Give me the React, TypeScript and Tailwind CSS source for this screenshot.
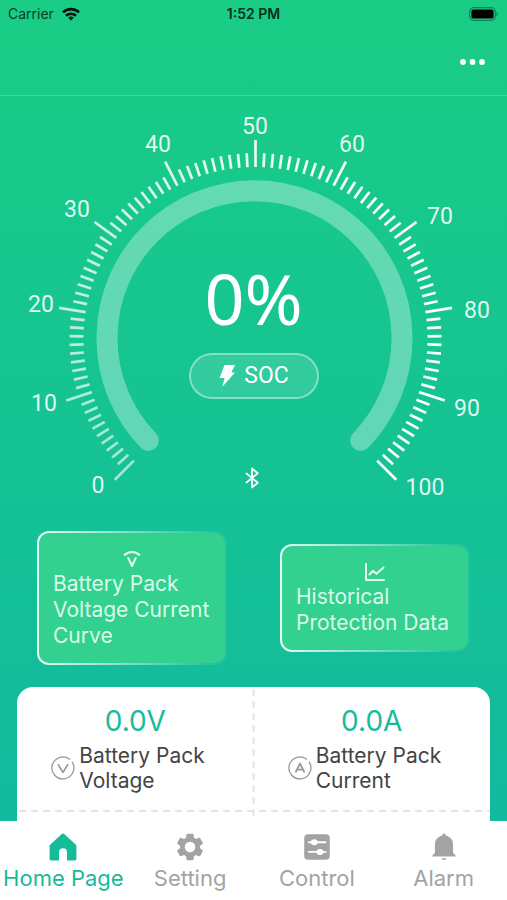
import type { ReactNode } from 'react';

const CX = 255.5;
const CY = 243;

const gaugeLabels = [
  { value: 0, x: 98, y: 397 },
  { value: 10, x: 44, y: 315 },
  { value: 20, x: 41, y: 216 },
  { value: 30, x: 77, y: 121 },
  { value: 40, x: 158, y: 56 },
  { value: 50, x: 255, y: 38 },
  { value: 60, x: 352, y: 56 },
  { value: 70, x: 440, y: 128 },
  { value: 80, x: 477, y: 222 },
  { value: 90, x: 467, y: 320 },
  { value: 100, x: 425, y: 399 },
];

function StatusBar() {
  return (
    <div className="grid h-7 grid-cols-3 items-center px-2 text-sm text-[#06402a]">
      <div className="flex items-center gap-2">
        <span>Carrier</span>
        <svg viewBox="0 0 18 14" className="h-[14px] w-[18px]" fill="none" stroke="#04140d" strokeWidth="2.6">
          <path d="M1 5.4a11.4 11.4 0 0 1 16 0" />
          <path d="M4 8.7a7.2 7.2 0 0 1 10 0" />
          <path d="M9 13.6 6.2 10.8a4 4 0 0 1 5.6 0Z" fill="#04140d" stroke="none" />
        </svg>
      </div>
      <span className="text-center font-semibold text-[#04301e]">1:52 PM</span>
      <svg viewBox="0 0 30 14" className="h-[14px] w-[30px] justify-self-end">
        <rect x="0.7" y="0.7" width="25.6" height="12.6" rx="4" fill="none" stroke="#0d8055" strokeWidth="1.2" />
        <rect x="2.4" y="2.4" width="22.2" height="9.2" rx="2.2" fill="#000" />
        <path d="M27.6 4.8c1.6.5 1.6 3.9 0 4.4Z" fill="#0d8055" />
      </svg>
    </div>
  );
}

function Header() {
  return (
    <header className="flex h-[68px] items-center justify-end border-b border-white/20 px-5">
      <button type="button" aria-label="More">
        <svg viewBox="0 0 28 8" className="h-2 w-7" fill="#fff">
          <circle cx="4" cy="4" r="2.9" />
          <circle cx="13.5" cy="4" r="2.9" />
          <circle cx="23" cy="4" r="2.9" />
        </svg>
      </button>
    </header>
  );
}

function BluetoothIcon() {
  return (
    <svg viewBox="0 0 24 24" className="size-6" fill="none" stroke="#fff" strokeWidth="1.8" strokeLinecap="round" strokeLinejoin="round">
      <path d="m4.500 7.500 11.200 9.200-5.700 4.800V2.500l5.700 4.800-11.200 9.200" />
    </svg>
  );
}

function Gauge() {
  const ticks = Array.from({ length: 101 }, (_, i) => i);

  return (
    <section className="relative">
      <svg viewBox="0 0 507 424" className="block w-full">
        {ticks.map((i) => (
          <line
            key={i}
            x1={CX}
            x2={CX}
            y1={CY - 172}
            y2={CY - (i % 10 === 0 ? 199 : 186)}
            stroke="#fff"
            strokeWidth="2.7"
            strokeOpacity={Math.min(0.97, 0.6 + i * 0.006)}
            transform={`rotate(${-135 + i * 2.7} ${CX} ${CY})`}
          />
        ))}
        <path
          d="M148.3 344.5A147.5 147.5 0 1 1 360.7 344.5"
          fill="none"
          stroke="#fff"
          strokeOpacity="0.33"
          strokeWidth="21"
          strokeLinecap="round"
        />
        <g fill="#fff" fillOpacity="0.88" fontSize="23" fontFamily="Roboto, sans-serif" textAnchor="middle">
          {gaugeLabels.map((l) => (
            <text key={l.value} x={l.x} y={l.y}>
              {l.value}
            </text>
          ))}
        </g>
      </svg>
      <div className="absolute inset-0 flex flex-col items-center pt-[162px] text-white">
        <p className="font-['Noto_Sans',sans-serif] text-[70px] leading-[80px]">0%</p>
        <div className="mt-[15px] flex h-[46px] w-[130px] items-center justify-center gap-2 rounded-full border-2 border-white/40 bg-white/12 font-['Roboto',sans-serif] text-[23px]">
          <svg viewBox="0 0 18 24" className="h-6 w-[18px]" fill="#fff">
            <path d="M6.500 1H17l-3.600 7.400H17L4.200 23l2.400-9H1.500Z" />
          </svg>
          <span>SOC</span>
        </div>
        <div className="mt-[67px]">
          <BluetoothIcon />
        </div>
      </div>
    </section>
  );
}

function CurveIcon() {
  return (
    <svg viewBox="0 0 24 24" className="size-6" fill="none" stroke="#e4fbef" strokeWidth="2" strokeLinecap="round" strokeLinejoin="round">
      <path d="M4.6 8a10.4 10.4 0 0 1 14.8 0" />
      <path d="m8.3 11 3.7 8 3.7-8" />
    </svg>
  );
}

function ChartIcon() {
  return (
    <svg viewBox="0 0 24 24" className="size-6" fill="none" stroke="#e4fbef" strokeWidth="2" strokeLinecap="round" strokeLinejoin="round">
      <path d="M3 4v16h18" />
      <path d="m6.500 14.500 3.500-3.700 3.500 2.900L20.500 7.500" />
    </svg>
  );
}

function ShortcutCard({ icon, title }: { icon: ReactNode; title: string }) {
  return (
    <button
      type="button"
      className="w-[190px] rounded-xl bg-linear-to-r from-white/90 to-white/5 to-95% p-[2px] text-left"
    >
      <span className="flex flex-col items-center rounded-[10px] bg-[#32d18f] p-[14px]">
        {icon}
        <span className="w-full text-[21px] leading-[26px] text-[#dcfaea]">{title}</span>
      </span>
    </button>
  );
}

function MeterIcon({ children }: { children: ReactNode }) {
  return (
    <svg viewBox="0 0 24 24" className="size-6 shrink-0" fill="none" stroke="#999" strokeWidth="1.3" strokeLinejoin="round">
      <path d="M18.6 3.2A11 11 0 1 0 21.3 6.2" strokeLinecap="round" />
      {children}
    </svg>
  );
}

function Reading({ value, label, icon }: { value: string; label: string; icon: ReactNode }) {
  return (
    <div className="flex flex-col items-center pt-4">
      <p className="text-[28px] leading-9 text-[#16bb9a]">{value}</p>
      <div className="mt-1 flex items-center gap-1">
        <MeterIcon>{icon}</MeterIcon>
        <span className="w-[140px] text-[21px] leading-[25px] text-[#444]">{label}</span>
      </div>
    </div>
  );
}

function Readings() {
  return (
    <section className="relative mx-[17px] mt-[22px] rounded-t-2xl bg-white">
      <div className="grid h-[124px] grid-cols-2">
        <Reading
          value="0.0V"
          label="Battery Pack Voltage"
          icon={<path d="m7 8.2 5 8.2 5-8.2" strokeWidth="1.7" />}
        />
        <Reading
          value="0.0A"
          label="Battery Pack Current"
          icon={<path d="M7.500 16.500 12 7.500l4.500 9M9.200 13.600h5.600" strokeWidth="1.7" />}
        />
      </div>
      <div className="h-10" />
      {/* dashed separators */}
      <svg className="absolute inset-0 size-full" stroke="#e4e4e4" strokeWidth="2" strokeDasharray="7 5">
        <line x1="50%" x2="50%" y1="2" y2="100%" />
        <line x1="2" x2="100%" y1="124" y2="124" />
      </svg>
    </section>
  );
}

function HomeIcon() {
  return (
    <svg viewBox="0 0 28 28" className="size-7" fill="currentColor">
      <path d="M12.800 1.100a1.800 1.800 0 0 1 2.400 0L26.700 11.400a2 2 0 0 1 .7 1.500V26a1.400 1.400 0 0 1-1.400 1.400h-8V19.200a4 4 0 0 0-8 0v8.200H2A1.400 1.400 0 0 1 .6 26V12.900a2 2 0 0 1 .7-1.500Z" />
    </svg>
  );
}

function GearIcon() {
  return (
    <svg viewBox="0 0 28 28" className="size-7">
      <circle cx="14" cy="14" r="7.600" fill="none" stroke="currentColor" strokeWidth="4.600" />
      {[0, 60, 120, 180, 240, 300].map((angle) => (
        <path
          key={angle}
          d="M11.300.8h5.400a.8.800 0 0 1 .8.700l.5 3.500 1.600 1.600h-11.200L10 5l.5-3.500a.8.800 0 0 1 .8-.7Z"
          fill="currentColor"
          transform={`rotate(${angle} 14 14)`}
        />
      ))}
    </svg>
  );
}

function ControlIcon() {
  return (
    <svg viewBox="0 0 28 28" className="size-7">
      <rect x="1.200" y="1.200" width="25.600" height="25.600" rx="4" fill="currentColor" />
      <path d="M5.800 9.300h16.800M5.800 18.900h16.800" stroke="#fff" strokeWidth="1.900" strokeLinecap="round" />
      <ellipse cx="11.300" cy="9.300" rx="3.400" ry="3" fill="#fff" />
      <ellipse cx="17" cy="18.900" rx="3.400" ry="3" fill="#fff" />
    </svg>
  );
}

function BellIcon() {
  return (
    <svg viewBox="0 0 28 28" className="size-7" fill="currentColor">
      <path d="M14 .6c1 0 1.700.8 1.900 1.900 4.400 1.100 7.200 4.700 7.200 9.300v8l2.200 2.400c.6.700.3 1.300-.5 1.300H3.200c-.8 0-1.100-.6-.5-1.300l2.200-2.400v-8c0-4.600 2.800-8.200 7.200-9.300C12.300 1.400 13 .6 14 .6Z" />
      <path d="M11.500 25.300h5a2.600 2.200 0 0 1-5 0Z" />
    </svg>
  );
}

const tabs = [
  { label: 'Home Page', icon: <HomeIcon />, active: true },
  { label: 'Setting', icon: <GearIcon />, active: false },
  { label: 'Control', icon: <ControlIcon />, active: false },
  { label: 'Alarm', icon: <BellIcon />, active: false },
];

function TabBar() {
  return (
    <nav className="relative grid h-[79px] shrink-0 grid-cols-4 bg-white">
      {tabs.map((tab) => (
        <button
          key={tab.label}
          type="button"
          className={
            'flex flex-col items-center pt-[10px] text-[22px] leading-[30px] whitespace-nowrap ' +
            (tab.active ? 'text-[#16bb9a]' : 'text-[#a3a3a3]')
          }
        >
          <span className="flex h-8 items-center">{tab.icon}</span>
          {tab.label}
        </button>
      ))}
    </nav>
  );
}

export default function App() {
  return (
    <div className="flex h-screen flex-col overflow-hidden bg-linear-to-b from-[#1acd85] to-[#12b8a0] font-['Inter',sans-serif]">
      <main className="min-h-0 flex-1 overflow-hidden">
        <StatusBar />
        <Header />
        <Gauge />
        <section className="mt-[11px] flex items-center justify-between px-[37px]">
          <ShortcutCard icon={<CurveIcon />} title="Battery Pack Voltage Current Curve" />
          <ShortcutCard icon={<ChartIcon />} title="Historical Protection Data" />
        </section>
        <Readings />
      </main>
      <TabBar />
    </div>
  );
}
